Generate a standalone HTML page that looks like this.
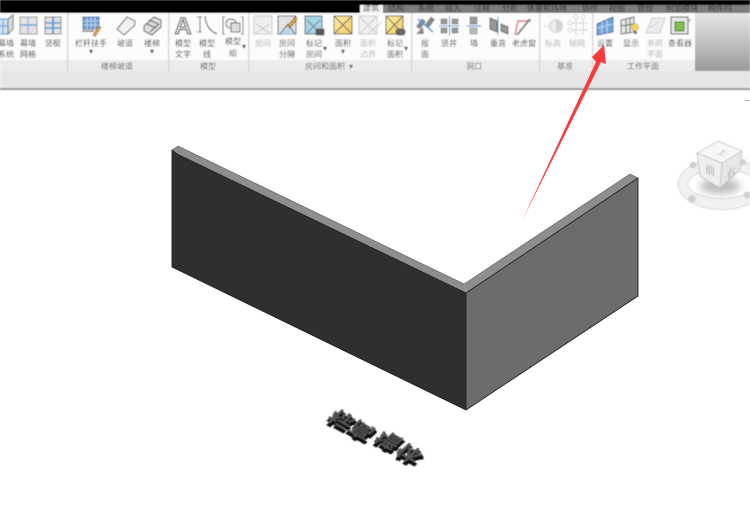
<!DOCTYPE html>
<html lang="zh"><head><meta charset="utf-8"><style>
html,body{margin:0;padding:0;background:#fff;width:750px;height:517px;overflow:hidden}
svg{display:block}
text{font-family:"Liberation Sans","Noto Sans CJK SC",sans-serif;font-size:8px;fill:#444;text-anchor:middle}
.d{fill:#b5b5b5}.t{fill:#666}.tab{fill:#333;font-size:8px}
.c{font-family:"Liberation Serif","Noto Serif CJK SC",serif;font-size:11px;fill:#9a9a9a}
.h{font-size:25px;font-weight:bold;fill:#2a2a2a;stroke:#1c1c1c;stroke-width:1.4}
.s{font-size:25px;font-weight:bold;fill:#111;stroke:#111;stroke-width:2.2}
</style></head><body>
<svg width="750" height="517" viewBox="0 0 750 517" xmlns="http://www.w3.org/2000/svg">
<defs>
<linearGradient id="g" x1="0" y1="0" x2="0" y2="1"><stop offset="0" stop-color="#e6e6e6"/><stop offset="1" stop-color="#9a9a9a"/></linearGradient>
<linearGradient id="y" x1="0" y1="0" x2="1" y2="1"><stop offset="0" stop-color="#fff0a8"/><stop offset="1" stop-color="#f2c95c"/></linearGradient>
<filter id="b" x="-5%" y="-5%" width="110%" height="110%"><feGaussianBlur stdDeviation="0.42"/></filter>
<filter id="b3" x="-40%" y="-60%" width="180%" height="220%"><feGaussianBlur stdDeviation="4"/></filter>
</defs>
<rect width="750" height="517" fill="#fff"/>
<g filter="url(#b)">
<rect x="360" y="4" width="390" height="9" fill="#7c7c7c"/>
<rect x="360" y="4" width="23" height="9" fill="#f4f4f4"/>
<text x="371" y="11" fill="#444">建筑</text>
<text class="tab" x="396" y="11">结构</text><text class="tab" x="426" y="11">系统</text><text class="tab" x="453" y="11">插入</text><text class="tab" x="482" y="11">注释</text><text class="tab" x="510" y="11">分析</text><text class="tab" x="547" y="11">体量和场地</text><text class="tab" x="590" y="11">协作</text><text class="tab" x="617" y="11">视图</text><text class="tab" x="645" y="11">管理</text><text class="tab" x="682" y="11">附加模块</text><text class="tab" x="720" y="11">构件坞</text>
<rect width="750" height="5" fill="#000"/>
<rect width="360" height="13" fill="#000"/>
<rect y="13" width="695" height="47" fill="#fcfcfc"/>
<rect y="60" width="695" height="11" fill="#ececec"/>
<rect x="695" y="13" width="55" height="58" fill="url(#g)"/>
<rect y="71" width="750" height="17" fill="#e6e6e6"/>
<rect y="88" width="750" height="2" fill="#9a9a9a"/>
<g fill="#d8d8d8"><rect x="67" y="13" width="1.5" height="58"/><rect x="168" y="13" width="1.5" height="58"/><rect x="248" y="13" width="1.5" height="58"/><rect x="411" y="13" width="1.5" height="58"/><rect x="539" y="13" width="1.5" height="58"/><rect x="592" y="13" width="1.5" height="58"/></g>

<!-- curtain -->
<g stroke="#6aa6d8" stroke-width="1.2" fill="#cfe3f3"><rect x="-4" y="19" width="12" height="15"/><path d="M8 19l5-4v14l-5 5z" fill="#ddd" stroke="#888"/><path d="M-4 26h12M3 19v15"/></g>
<g><rect x="20" y="17" width="17" height="17" fill="#e2e2e2" stroke="#999"/><path d="M20 25h17" stroke="#6aa6d8" stroke-width="1.5"/><path d="M28 17v17" stroke="#6aa6d8"/></g>
<g><rect x="45" y="17" width="16" height="17" fill="#e2e2e2" stroke="#888"/><path d="M45 23h16M45 28h16" stroke="#5a9ad0" stroke-width="1.5"/><path d="M53 17v17" stroke="#5a9ad0" stroke-width="2"/></g>
<text x="6" y="46">幕墙</text><text x="6" y="57">系统</text><text x="28" y="46">幕墙</text><text x="28" y="57">网格</text><text x="53" y="46">竖梃</text>

<!-- stair/railing -->
<g><rect x="83" y="17" width="16" height="12" fill="#6f9fd0" stroke="#48709c"/><path d="M83 21h16M83 25h16M87 17v12M91 17v12M95 17v12" stroke="#cfe0f0" stroke-width=".8"/><path d="M82 31h12" stroke="#999" stroke-width="2"/><path d="M93 35l6-9 2 1.500-6 9z" fill="#e8a640" stroke="#8a6a30" stroke-width=".7"/></g>
<path d="M117 29l10-12 8 4 0 4-11 10z" fill="#f0f0f0" stroke="#666"/>
<path d="M144 26l10-9 7 3v7l-9 8-8-4z" fill="#ddd" stroke="#555"/><path d="M147 24l9 4M149 20l9 4M150 32l9-8" stroke="#555" fill="none"/>
<text x="91" y="46">栏杆扶手</text><text x="91" y="54" font-size="5">▾</text><text x="125" y="46">坡道</text><text x="152" y="46">楼梯</text><text x="152" y="54" font-size="5">▾</text>
<text class="t" x="117" y="69">楼梯坡道</text>

<!-- model -->
<text x="183" y="34" style="font-size:24px;fill:#d4d4d4;stroke:#555;stroke-width:.9;font-weight:bold">A</text>
<path d="M200 17v15M197 17h5M197 32h5" stroke="#666" fill="none"/><path d="M205 16c1 10 5 15 12 18" stroke="#666" fill="none" stroke-width="1.2"/>
<path d="M225 17h-2v17h2M241 17h2v17h-2" stroke="#666" fill="none"/><rect x="226" y="19" width="10" height="9" rx="4" fill="#eee" stroke="#666"/><rect x="231" y="23" width="9" height="9" fill="#ddd" stroke="#666"/>
<text x="183" y="46">模型</text><text x="183" y="57">文字</text><text x="207" y="46">模型</text><text x="207" y="57">线</text><text x="233" y="44">模型</text><text x="233" y="56">组</text><text x="244" y="49" font-size="5">▾</text>
<text class="t" x="208" y="69">模型</text>

<!-- rooms -->
<g fill="#efefef" stroke="#c8c8c8"><rect x="254" y="16" width="18" height="18"/><path d="M256 24l14 9M270 24l-14 9"/></g>
<g stroke="#666"><rect x="278" y="16" width="18" height="18" fill="#dfe3e6"/><path d="M280 34l8-10 7 10" fill="#bcd9e8"/><path d="M288 26l7-9 2 2-7 9z" fill="#e8a640" stroke="#8a6a30"/></g>
<g stroke="#666"><rect x="305" y="16" width="17" height="18" fill="#a9d3e6"/><path d="M307 20l13 13M320 20l-13 13" stroke="#6a8a9a"/><rect x="316" y="29" width="8" height="6" rx="1" fill="#555"/></g>
<g stroke="#666"><rect x="334" y="16" width="18" height="18" fill="url(#y)"/><path d="M334 16l18 18M352 16l-18 18"/></g>
<g fill="#f0f0f0" stroke="#cfcfcf"><rect x="359" y="16" width="18" height="18"/><path d="M359 16l18 18M377 16l-18 18M368 34l14-12"/></g>
<g stroke="#666"><rect x="386" y="16" width="17" height="18" fill="url(#y)"/><path d="M386 16l17 18M403 16l-17 18"/><rect x="396" y="29" width="9" height="6" rx="2.500" fill="#666"/></g>
<text class="d" x="263" y="46">房间</text><text x="287" y="46">房间</text><text x="287" y="57">分隔</text><text x="314" y="46">标记</text><text x="314" y="57">房间</text><text x="325" y="51" font-size="5">▾</text><text x="343" y="46">面积</text><text x="343" y="54" font-size="5">▾</text><text class="d" x="368" y="46">面积</text><text class="d" x="368" y="57">边界</text><text x="395" y="46">标记</text><text x="395" y="57">面积</text><text x="406" y="51" font-size="5">▾</text>
<text class="t" x="325" y="69">房间和面积</text><text class="t" x="351" y="69" font-size="6">▾</text>

<!-- openings -->
<path d="M418 28l6-8 M433 18l-6 8" stroke="#888" stroke-width="5"/><path d="M418 19l15 13" stroke="#4a9ae0" stroke-width="1.500"/><path d="M416 34l7-7 1 7z" fill="#888"/>
<g fill="#9a9a9a" stroke="#666" stroke-width=".5"><rect x="441" y="19" width="6" height="5"/><rect x="452" y="19" width="6" height="5"/><rect x="441" y="28" width="6" height="5"/><rect x="452" y="28" width="6" height="5"/></g><path d="M449.500 16v20M439 26h21" stroke="#4a9ae0"/>
<rect x="470" y="17" width="7" height="7" fill="#999" stroke="#666" stroke-width=".5"/><rect x="470" y="28" width="7" height="6" fill="#bbb" stroke="#666" stroke-width=".5"/><path d="M467 26h14" stroke="#4a9ae0" stroke-width="1.200"/>
<path d="M490 18l7 3v11l-7-3z" fill="#999" stroke="#666"/><path d="M498 17v18" stroke="#4a9ae0"/><path d="M501 24l7 3v7l-7-3z" fill="#999" stroke="#666"/>
<path d="M515 35l3-14h13" fill="none" stroke="#d05050" stroke-width="1.200"/><path d="M517 35l13-16" stroke="#888" stroke-width="2"/>
<text x="425" y="46">按</text><text x="425" y="57">面</text><text x="449" y="46">竖井</text><text x="474" y="46">墙</text><text x="498" y="46">垂直</text><text x="524" y="46">老虎窗</text>
<text class="t" x="474" y="69">洞口</text>

<!-- datum -->
<circle cx="556" cy="26" r="6.500" fill="#ececec" stroke="#d4d4d4"/><path d="M556 19.500v13a6.500 6.500 0 0 0 0-13" fill="#d4d4d4"/><path d="M544 26h7" stroke="#d0d0d0" stroke-dasharray="2 1.500"/>
<g stroke="#d4d4d4" fill="#fff"><path d="M572 23h16M572 30h16M576 19v16M583 19v16"/><circle cx="576" cy="17" r="2"/><circle cx="583" cy="17" r="2"/><circle cx="570" cy="23" r="2"/><circle cx="570" cy="30" r="2"/></g>
<text class="d" x="553" y="46">标高</text><text class="d" x="577" y="46">轴网</text><text class="t" x="565" y="69">基准</text>

<!-- work plane -->
<path d="M597 24l16-7v15l-16 3z" fill="#6fa3d6" stroke="#3f6c9c"/><path d="M602 22v12M607 20v13M597 28l16-4" stroke="#d4e4f2" stroke-width=".8"/>
<path d="M621 20l13-3v15l-13 2z" fill="#e6e6e6" stroke="#666"/><path d="M626 19v14M630 18v15M621 26l13-2" stroke="#666"/><circle cx="635" cy="27" r="3.500" fill="#f6d85a" stroke="#b09a30" stroke-width=".6"/><rect x="634" y="31" width="3" height="3" fill="#777"/>
<path d="M646 33l6-15h13l-5 15z" fill="#eee" stroke="#ccc"/><path d="M650 28l10-7" stroke="#ccc"/>
<rect x="671" y="17" width="17" height="17" fill="#e6e6e6" stroke="#444"/><rect x="675" y="22" width="9" height="9" fill="#7fbf4a" stroke="#4a7a2a"/><path d="M688 22l3-3" stroke="#888"/>
<text x="605" y="46">设置</text><text x="631" y="46">显示</text><text class="d" x="655" y="46">参照</text><text class="d" x="655" y="57">平面</text><text x="680" y="46">查看器</text>
<text class="t" x="643" y="69">工作平面</text>
</g>

<!-- walls -->
<g style="filter:blur(.35px)">
<path d="M172 150l6-4 286 138 2 9-289-139z" fill="#8e8e8e"/>
<path d="M464 284l166-110 8 4-172 115z" fill="#8e8e8e"/>
<path d="M172 150l5 4 289 139v117L172 267z" fill="#2f2f2f"/>
<path d="M466 293l172-115v118L466 410z" fill="#6c6c6c"/>
<path d="M172 150v117l294 143 172-114V178L466 293 177 154zM466 293v117" fill="none" stroke="#222" stroke-width=".9"/>
<path d="M172 150l6-4 286 138M464 284l166-110 8 4" fill="none" stroke="#666" stroke-width=".7"/>
</g>

<!-- arrow -->
<path d="M522 221L596 62L592 57L604 45L606 64L601 62Z" fill="#f83a3a" style="filter:blur(.35px)"/>

<!-- 3D text -->
<g filter="url(#b)">
<text class="s" transform="matrix(.8,.45,.6,-.55,347,417)">标</text>
<text class="s" transform="matrix(.8,.45,.6,-.55,367,428)">高</text>
<text class="s" transform="matrix(.8,.45,.6,-.55,394,438)">墙</text>
<text class="s" transform="matrix(.8,.45,.6,-.55,415,451)">体</text>
<text class="h" style="fill:#555;stroke:none" transform="matrix(.8,.45,.6,-.55,347,414)">标</text>
<text class="h" style="fill:#555;stroke:none" transform="matrix(.8,.45,.6,-.55,367,425)">高</text>
<text class="h" style="fill:#555;stroke:none" transform="matrix(.8,.45,.6,-.55,394,435)">墙</text>
<text class="h" style="fill:#555;stroke:none" transform="matrix(.8,.45,.6,-.55,415,448)">体</text>
</g>

<!-- view cube -->
<g style="filter:blur(.45px)">
<ellipse cx="722" cy="184" rx="39" ry="20" fill="none" stroke="#f1f1f1" stroke-width="10"/>
<ellipse cx="722" cy="184" rx="44" ry="25.500" fill="none" stroke="#cdcdcd" stroke-width=".7"/>
<ellipse cx="722" cy="184" rx="34" ry="14.500" fill="none" stroke="#d4d4d4" stroke-width=".7"/>
<ellipse cx="720" cy="186" rx="20" ry="8" fill="#bdbdbd" filter="url(#b3)"/>
<path d="M697 153l25 10-2 25-20-12z" fill="#efefef" stroke="#bcbcbc" stroke-width=".7"/>
<path d="M722 163l20-12-2 19-20 18z" fill="#e6e6e6" stroke="#bcbcbc" stroke-width=".7"/>
<path d="M697 153l21-12 24 10-20 12z" fill="#f7f7f7" stroke="#bcbcbc" stroke-width=".7"/>
<text class="c" transform="matrix(1,.15,-.5,.55,720,155)">上</text>
<text class="c" transform="matrix(.9,.35,0,1,710,174)">前</text>
<text class="c" transform="matrix(.85,-.5,0,1,731,177)">右</text>
<g fill="#d0d0d0"><circle cx="693" cy="165" r="3.500"/><circle cx="692" cy="199" r="4"/><circle cx="743" cy="162" r="3"/><circle cx="747" cy="195" r="3.500"/></g>
</g>
<rect x="745" y="100" width="5" height="1" fill="#aaa"/>
</svg>
</body></html>
